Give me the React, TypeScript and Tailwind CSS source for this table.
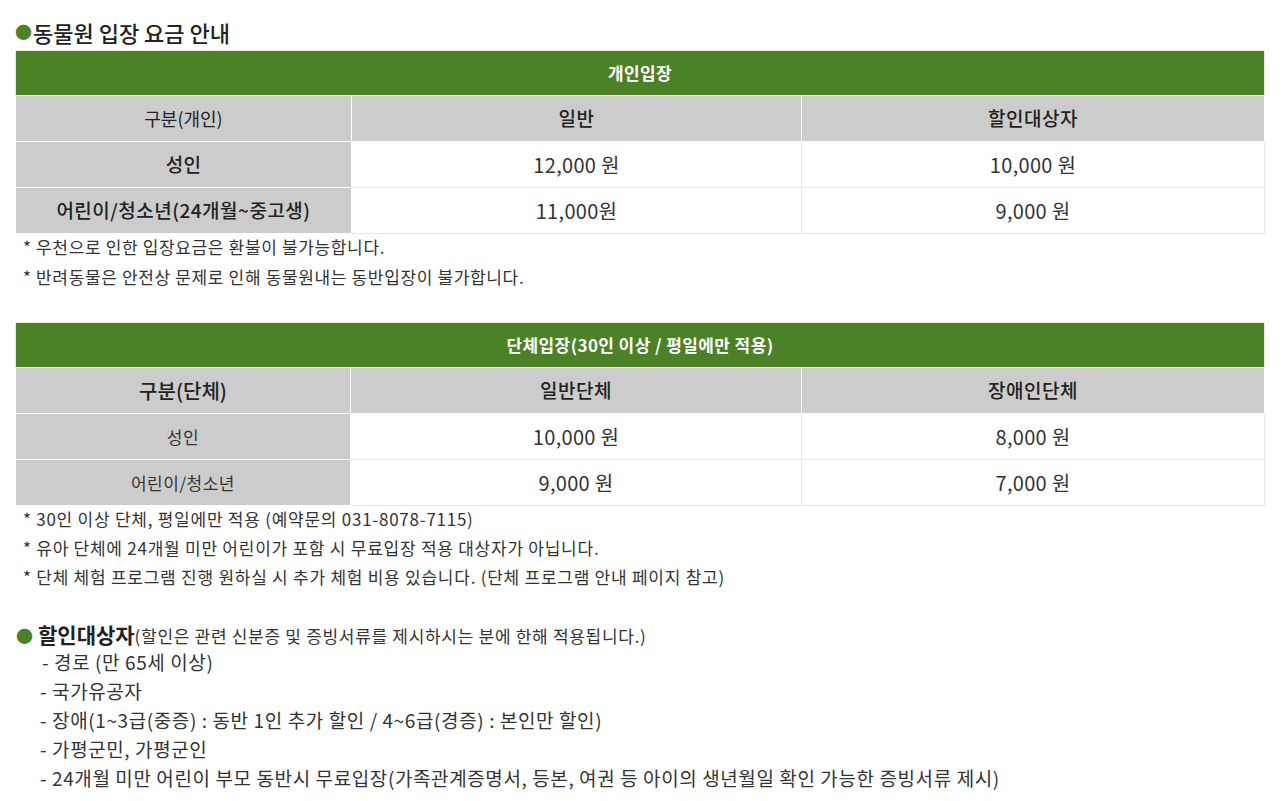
const font = { fontFamily: '"Noto Sans CJK KR", "Noto Sans", sans-serif' };

function Header({ label }: { label: string }) {
  return (
    <tr>
      <th colSpan={3} className="h-[45px] bg-[#4b8226] border border-[#e8e8e8] text-white text-[17px] tracking-[0.4px] font-bold">
        {label}
      </th>
    </tr>
  );
}

export default function App() {
  const grayCell = 'bg-[#cccccc] border border-white text-[#222]';
  const whiteCell = 'bg-white border border-[#e6e6e6] text-[#333] text-[20px] tracking-[0.3px]';
  const note = 'h-[30px] leading-[26px]';
  const note2 = 'h-[29px] leading-[26px]';
  const item = 'h-[29px] leading-[26px]';

  return (
    <div className="bg-white w-[1284px] h-[801px] overflow-hidden text-[#333]" style={font}>
      <div className="pl-[15px] pr-[19px] pt-[17px]">
        <h2 className="text-[22px] font-medium text-[#222] leading-[30px] flex items-center">
          <span className="text-[#4b8226] text-[17px] mr-[1px]">●</span>동물원 입장 요금 안내
        </h2>

        <table className="w-full border-collapse mt-[3px] text-center">
          <colgroup>
            <col className="w-[336px]" />
            <col className="w-[450px]" />
            <col />
          </colgroup>
          <thead>
            <Header label="개인입장" />
          </thead>
          <tbody>
            <tr className="h-[46px]">
              <td className={`${grayCell} text-[18px]`}>구분(개인)</td>
              <td className={`${grayCell} text-[19px] tracking-[0.5px] font-medium`}>일반</td>
              <td className={`${grayCell} text-[19px] tracking-[0.5px] font-medium`}>할인대상자</td>
            </tr>
            <tr className="h-[46px]">
              <td className={`${grayCell} text-[19px] tracking-[0.3px] font-medium`}>성인</td>
              <td className={whiteCell}>12,000 원</td>
              <td className={whiteCell}>10,000 원</td>
            </tr>
            <tr className="h-[46px]">
              <td className={`${grayCell} text-[19px] tracking-[0.5px] font-medium`}>어린이/청소년(24개월~중고생)</td>
              <td className={whiteCell}>11,000원</td>
              <td className={whiteCell}>9,000 원</td>
            </tr>
          </tbody>
        </table>

        <div className="pl-[8px] text-[17px] tracking-[0.65px] text-[#333]">
          <p className={note}>* 우천으로 인한 입장요금은 환불이 불가능합니다.</p>
          <p className={note}>* 반려동물은 안전상 문제로 인해 동물원내는 동반입장이 불가합니다.</p>
        </div>

        <table className="w-full border-collapse mt-[28px] text-center">
          <colgroup>
            <col className="w-[335px]" />
            <col className="w-[451px]" />
            <col />
          </colgroup>
          <thead>
            <Header label="단체입장(30인 이상 / 평일에만 적용)" />
          </thead>
          <tbody>
            <tr className="h-[46px]">
              <td className={`${grayCell} text-[20px] font-medium`}>구분(단체)</td>
              <td className={`${grayCell} text-[19px] tracking-[0.5px] font-medium`}>일반단체</td>
              <td className={`${grayCell} text-[19px] tracking-[0.5px] font-medium`}>장애인단체</td>
            </tr>
            <tr className="h-[46px]">
              <td className={`${grayCell} text-[17px] tracking-[0.5px] text-[#333]`}>성인</td>
              <td className={whiteCell}>10,000 원</td>
              <td className={whiteCell}>8,000 원</td>
            </tr>
            <tr className="h-[46px]">
              <td className={`${grayCell} text-[17px] tracking-[0.5px] text-[#333]`}>어린이/청소년</td>
              <td className={whiteCell}>9,000 원</td>
              <td className={whiteCell}>7,000 원</td>
            </tr>
          </tbody>
        </table>

        <div className="pl-[8px] text-[17px] tracking-[0.75px] text-[#333]">
          <p className={note2}>* 30인 이상 단체, 평일에만 적용 (예약문의 031-8078-7115)</p>
          <p className={note2}>* 유아 단체에 24개월 미만 어린이가 포함 시 무료입장 적용 대상자가 아닙니다.</p>
          <p className={note2}>* 단체 체험 프로그램 진행 원하실 시 추가 체험 비용 있습니다. (단체 프로그램 안내 페이지 참고)</p>
        </div>

        <div className="mt-[26px] pl-[1px]">
          <p className="h-[30px] text-[#333] flex items-baseline">
            <span className="text-[#4b8226] text-[17px] mr-[5px]">●</span>
            <span className="text-[21px] font-bold text-[#222]">할인대상자</span>
            <span className="text-[17px] tracking-[0.7px]">(할인은 관련 신분증 및 증빙서류를 제시하시는 분에 한해 적용됩니다.)</span>
          </p>
          <ul className="pl-[24px] text-[19px] tracking-[0.6px] text-[#333]">
            <li className={`${item} pl-[2px]`}>- 경로 (만 65세 이상)</li>
            <li className={item}>- 국가유공자</li>
            <li className={item}>- 장애(1~3급(중증) : 동반 1인 추가 할인 / 4~6급(경증) : 본인만 할인)</li>
            <li className={item}>- 가평군민, 가평군인</li>
            <li className={item}>- 24개월 미만 어린이 부모 동반시 무료입장(가족관계증명서, 등본, 여권 등 아이의 생년월일 확인 가능한 증빙서류 제시)</li>
          </ul>
        </div>
      </div>
    </div>
  );
}
